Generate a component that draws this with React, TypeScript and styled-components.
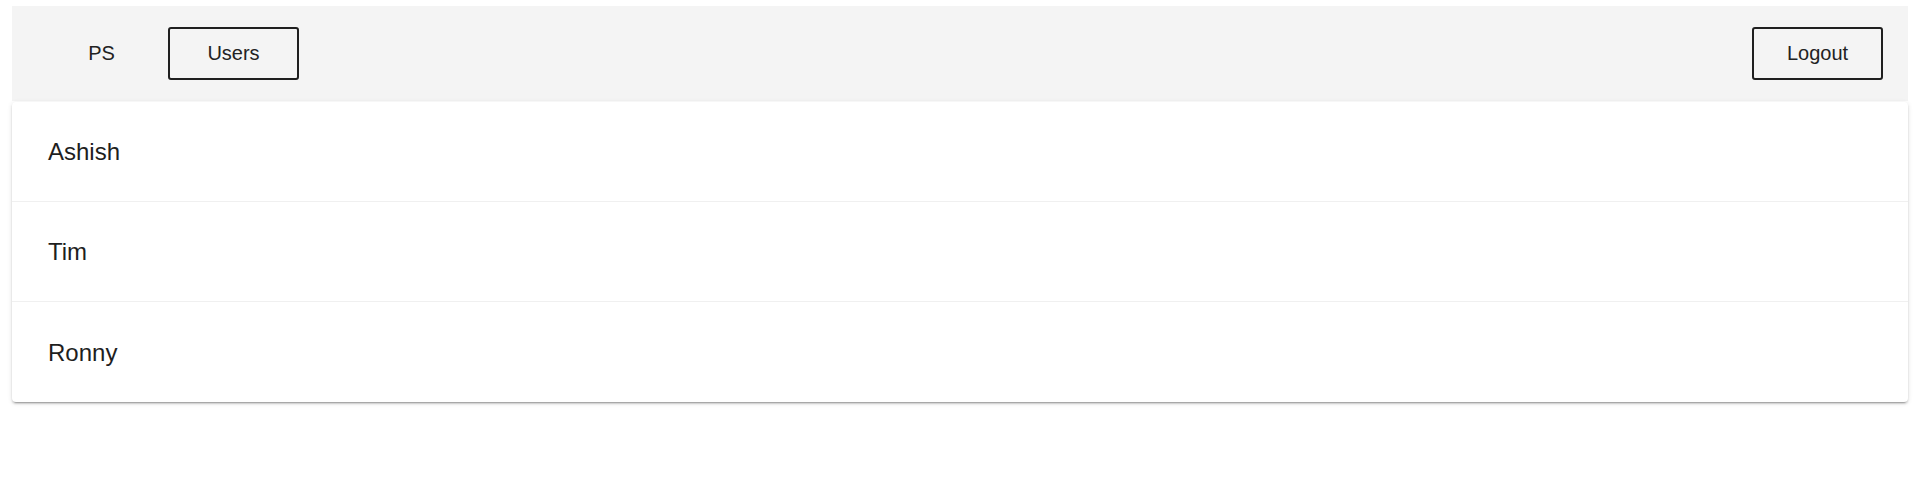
import React from "react";
import styled, { createGlobalStyle } from "styled-components";

const GlobalStyle = createGlobalStyle`
  html, body {
    margin: 0;
    padding: 0;
    background: #ffffff;
  }
  body {
    font-family: "Liberation Sans", Arial, sans-serif;
    color: #222222;
  }
`;

const Page = styled.div`
  min-height: 100vh;
  box-sizing: border-box;
  padding: 6px 11px 24px 12px;
  display: flex;
  flex-direction: column;
  gap: 1px;
`;

const Header = styled.header`
  height: 95px;
  background: #f4f4f4;
  display: flex;
  align-items: center;
  justify-content: space-between;
  padding: 0 25px 0 24px;
  box-sizing: border-box;
`;

const NavGroup = styled.nav`
  display: flex;
  align-items: center;
  gap: 1px;
`;

const NavButton = styled.button<{ $outlined?: boolean }>`
  box-sizing: border-box;
  width: 131px;
  height: 53px;
  border: 2px solid ${(p) => (p.$outlined ? "#1f1f1f" : "transparent")};
  border-radius: 3px;
  background: transparent;
  font-family: "Liberation Sans", Arial, sans-serif;
  font-size: 20px;
  color: #222222;
  padding: 0;
  cursor: pointer;
  display: flex;
  align-items: center;
  justify-content: center;
`;

const Card = styled.ul`
  list-style: none;
  margin: 0;
  padding: 0;
  background: #ffffff;
  border-radius: 4px;
  box-shadow: 0 3px 1px -2px rgba(0, 0, 0, 0.2), 0 2px 2px 0 rgba(0, 0, 0, 0.14),
    0 1px 5px 0 rgba(0, 0, 0, 0.12);
`;

const Row = styled.li`
  box-sizing: border-box;
  height: 100px;
  display: flex;
  align-items: center;
  padding: 1px 0 0 36px;
  font-size: 24px;
  color: #1e1e1e;
  border-bottom: 1px solid #f0f0f0;
  &:last-child {
    border-bottom: none;
  }
`;

const users = ["Ashish", "Tim", "Ronny"];

export default function App() {
  return (
    <>
      <GlobalStyle />
      <Page>
        <Header>
          <NavGroup>
            <NavButton>PS</NavButton>
            <NavButton $outlined>Users</NavButton>
          </NavGroup>
          <NavButton $outlined>Logout</NavButton>
        </Header>
        <Card>
          {users.map((u) => (
            <Row key={u}>{u}</Row>
          ))}
        </Card>
      </Page>
    </>
  );
}
